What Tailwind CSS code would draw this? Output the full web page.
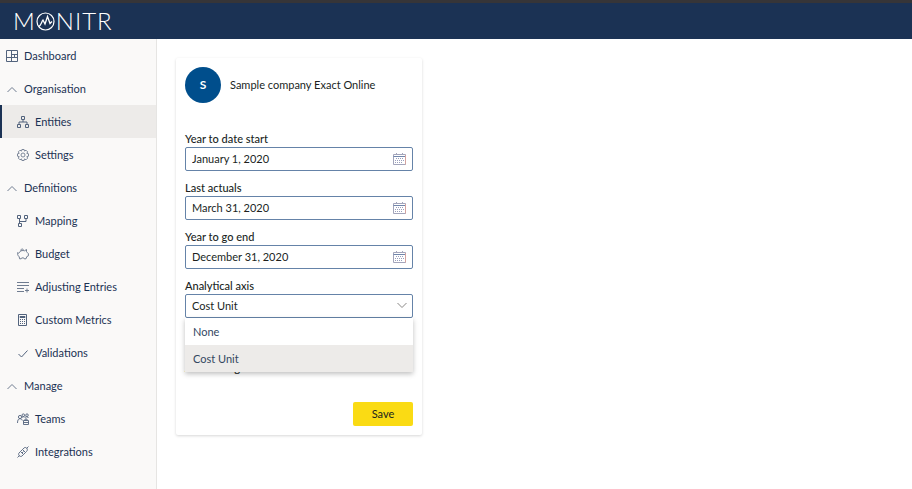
<!DOCTYPE html>
<html lang="en">
<head>
<meta charset="utf-8">
<title>Monitr - Entities</title>
<script src="https://cdn.jsdelivr.net/npm/@tailwindcss/browser@4"></script>
</head>
<body class="flex min-h-screen flex-col bg-white font-['Lato','Noto_Sans',sans-serif] text-[11px] leading-4 text-[#201f1e]">
<svg class="hidden">
  <symbol id="chev" viewBox="0 0 12 12"><path d="M1.500 9 6 4.500 10.500 9" fill="none" stroke="currentColor"/></symbol>
  <symbol id="cal" viewBox="0 0 13 12"><path d="M.5 1.500h12v10H.5zM3.500 0v2M9.500 0v2" fill="none" stroke="#a3a5bb"/><path d="M.5 3.500h12" stroke="#7186ab"/><path d="M12.500 2v9.500" stroke="#d4a3a0"/><path d="M3 5.500h8M2 7.500h9M2 9.500h7" stroke="#9a9fbc" stroke-dasharray="1 1"/></symbol>
</svg>
<header class="flex h-[39px] items-center border-t-3 border-[#363538] bg-[#1b3254] px-[13px]">
  <a href="#" aria-label="Monitr" class="flex items-center gap-px font-['Lato',sans-serif] text-2xl leading-6 font-light text-white">
    <span>M</span>
    <svg class="size-[19px]" viewBox="0 0 19 19" fill="none" stroke="#fff"><circle cx="9.500" cy="9.500" r="8.500" stroke-width="1.200"/><path d="M2.500 14.500C5 14 5.500 9.500 7 8l2 4 2.500-7.500 2.500 7 2-2" stroke-width="1.300"/></svg>
    <span>N</span><span>I</span><span>T</span><span>R</span>
  </a>
</header>
<div class="flex flex-1">
  <nav class="w-[157px] shrink-0 border-r border-[#e6e5e3] bg-[#faf9f8] text-[11px] text-[#1b3254]">
    <ul>
      <li><a href="#" class="flex h-[33px] items-center gap-1.5 pl-1.5"><svg class="size-3 text-[#52637d]" viewBox="0 0 12 12" fill="none" stroke="currentColor"><path d="M.5.5h11v11H.5zM5.500.5v11M.5 7.500h5M5.500 4.500h6M8.500 4.500v3M5.500 7.500h6"/></svg>Dashboard</a></li>
      <li><button class="flex h-[33px] w-full items-center gap-1.5 pl-1.5"><svg class="size-3 text-[#6f7c90]"><use href="#chev"/></svg>Organisation</button>
        <ul>
          <li><a href="#" aria-current="page" class="flex h-[33px] items-center gap-1.5 border-l-2 border-[#1b3254] bg-[#edebe9] pl-[15px]"><svg class="size-3 text-[#52637d]" viewBox="0 0 12 12" fill="none" stroke="currentColor"><path d="M4.500.5h3v3h-3zM.5 8.500h3v3h-3zM8.500 8.500h3v3h-3zM6 3.500v2.500M2 8.500V6h8v2.500"/></svg>Entities</a></li>
          <li><a href="#" class="flex h-[33px] items-center gap-1.5 pl-[17px]"><svg class="size-3 text-[#6f7c90]" viewBox="0 0 12 12" fill="none" stroke="currentColor" stroke-width=".9"><path d="M4.900.5h2.200l.4 1.600 1.500-.9 1.700 1.700-.9 1.500 1.700.4v2.400l-1.700.4.9 1.500-1.700 1.700-1.500-.9-.4 1.600H4.900l-.4-1.600-1.500.9-1.700-1.700.9-1.500L.5 7.200V4.800l1.700-.4-.9-1.500L3 1.200l1.500.9z"/><circle cx="6" cy="6" r="2"/></svg>Settings</a></li>
        </ul></li>
      <li><button class="flex h-[33px] w-full items-center gap-1.5 pl-1.5"><svg class="size-3 text-[#6f7c90]"><use href="#chev"/></svg>Definitions</button>
        <ul>
          <li><a href="#" class="flex h-[33px] items-center gap-1.5 pl-[17px]"><svg class="size-3 text-[#52637d]" viewBox="0 0 12 12" fill="none" stroke="currentColor"><path d="M.5.500h3v3h-3zM7.500.5h3v3h-3zM1.500 8.500h3v3h-3zM2.500 3.500v5M2.500 6.500h6.500v-3"/></svg>Mapping</a></li>
          <li><a href="#" class="flex h-[33px] items-center gap-1.5 pl-[17px]"><svg class="size-3 text-[#6f7c90]" viewBox="0 0 12 12" fill="none" stroke="currentColor"><path d="M3 3.500C4 2.500 6 2.300 7.500 2.800L9.500 1.500v2.200c1 .7 1 1.500 1.900 2v2.100l-1.600.8-.8 2.200H7.200l-.5-.9h-2l-.5.9H2.600l-.4-2C.7 7.700.3 5.500.5 4.700l1.200.6L3 3.500zM4 2.700C3.500.7 6.400.2 6.500 2.500"/></svg>Budget</a></li>
          <li><a href="#" class="flex h-[33px] items-center gap-1.5 pl-[17px]"><svg class="size-3 text-[#6f7c90]" viewBox="0 0 12 12" fill="none" stroke="currentColor"><path d="M0 1.500h12M0 4.500h12M0 7.500h7M0 10.500h7M8 9.500h4M10 7.500v4"/></svg>Adjusting Entries</a></li>
          <li><a href="#" class="flex h-[33px] items-center gap-1.5 pl-[17px]"><svg class="size-3 text-[#52637d]" viewBox="0 0 12 12" fill="none" stroke="currentColor"><path d="M1.500.5h8v11h-8zM3 2.500h5v1H3z"/><path d="M3 5.500h5M3 7.500h5M3 9.500h5" stroke-dasharray="1 1"/></svg>Custom Metrics</a></li>
          <li><a href="#" class="flex h-[33px] items-center gap-1.5 pl-[17px]"><svg class="size-3 text-[#52637d]" viewBox="0 0 12 12" fill="none" stroke="currentColor"><path d="M1.500 7 4.500 10 10.500 3.500"/></svg>Validations</a></li>
        </ul></li>
      <li><button class="flex h-[33px] w-full items-center gap-1.5 pl-1.5"><svg class="size-3 text-[#6f7c90]"><use href="#chev"/></svg>Manage</button>
        <ul>
          <li><a href="#" class="flex h-[33px] items-center gap-1.5 pl-[17px]"><svg class="size-3 text-[#52637d]" viewBox="0 0 12 12" fill="none" stroke="currentColor" stroke-width=".9"><circle cx="3" cy="4" r="1.600"/><circle cx="6.300" cy="2.200" r="1.300"/><circle cx="10" cy="2.200" r="1.300"/><path d="M.5 10c0-3 1-4.300 2.500-4.300S5 6.500 5.300 7.500M5 4.500c1-1 2.500-1 3 0 .5-1 3-1 3.500.5M6.500 7.500h5v4h-5zM8 7.500V6h2v1.500M6.500 9.500h5"/></svg>Teams</a></li>
          <li><a href="#" class="flex h-[33px] items-center gap-1.5 pl-[17px]"><svg class="size-3 text-[#52637d]" viewBox="0 0 12 12" fill="none" stroke="currentColor" stroke-width=".9"><path d="M.5 11.500 2.500 9.500M9.500 2.500l2-2M5.500 3.500l1.500-1.500c1-1 2.500-.5 3 .5s.5 2-.5 3L8.500 6.500zM3.500 5.500l3 3L5 10c-1 .8-2.200.5-2.800-.3S1.300 7.800 2 7zM5 7l1.500-1.500M6.500 8.500 8.500 6.500M3.500 5.500 5.500 3.500"/></svg>Integrations</a></li>
        </ul></li>
    </ul>
  </nav>
  <main class="flex-1 px-[19px] pt-[19px]">
    <form class="w-[246px] rounded-xs bg-white p-[9px] shadow-[0_1px_3px_rgba(0,0,0,0.16)]">
      <div class="flex items-center gap-[9px]">
        <div class="flex size-9 items-center justify-center rounded-full bg-[#004e8c] text-xs font-bold text-white">S</div>
        <h1>Sample company Exact Online</h1>
      </div>
      <div class="mt-7 flex flex-col gap-[9px]">
        <div><label for="start" class="block font-medium">Year to date start</label>
          <div class="flex h-6 items-center rounded-xs border border-[#6583a8] px-1.5"><input id="start" value="January 1, 2020" class="min-w-0 flex-1 outline-none"><svg class="h-3 w-[13px]"><use href="#cal"/></svg></div></div>
        <div><label for="actuals" class="block font-medium">Last actuals</label>
          <div class="flex h-6 items-center rounded-xs border border-[#6583a8] px-1.5"><input id="actuals" value="March 31, 2020" class="min-w-0 flex-1 outline-none"><svg class="h-3 w-[13px]"><use href="#cal"/></svg></div></div>
        <div><label for="end" class="block font-medium">Year to go end</label>
          <div class="flex h-6 items-center rounded-xs border border-[#6583a8] px-1.5"><input id="end" value="December 31, 2020" class="min-w-0 flex-1 outline-none"><svg class="h-3 w-[13px]"><use href="#cal"/></svg></div></div>
        <div class="relative"><label for="axis" class="block font-medium">Analytical axis</label>
          <div class="flex h-6 items-center rounded-xs border border-[#6583a8] px-1"><select id="axis" class="min-w-0 flex-1 appearance-none pl-0.5 outline-none"><option>None</option><option selected>Cost Unit</option></select><svg class="size-3 rotate-180 text-[#8a8886]"><use href="#chev"/></svg></div>
          <ul role="listbox" aria-label="Analytical axis" class="absolute inset-x-0 top-full bg-white text-[#33475f] shadow-[0_2px_5px_rgba(0,0,0,0.25)]">
            <li role="option" class="flex h-[27px] items-center px-2">None</li>
            <li role="option" aria-selected="true" class="flex h-[27px] items-center bg-[#edebe9] px-2">Cost Unit</li>
          </ul>
        </div>
      </div>
      <p class="mt-[42px] font-medium">Accounting</p>
      <div class="mt-[26px] flex justify-end"><button class="h-6 w-[60px] rounded-xs bg-[#fadb14]">Save</button></div>
    </form>
  </main>
</div>
</body>
</html>
